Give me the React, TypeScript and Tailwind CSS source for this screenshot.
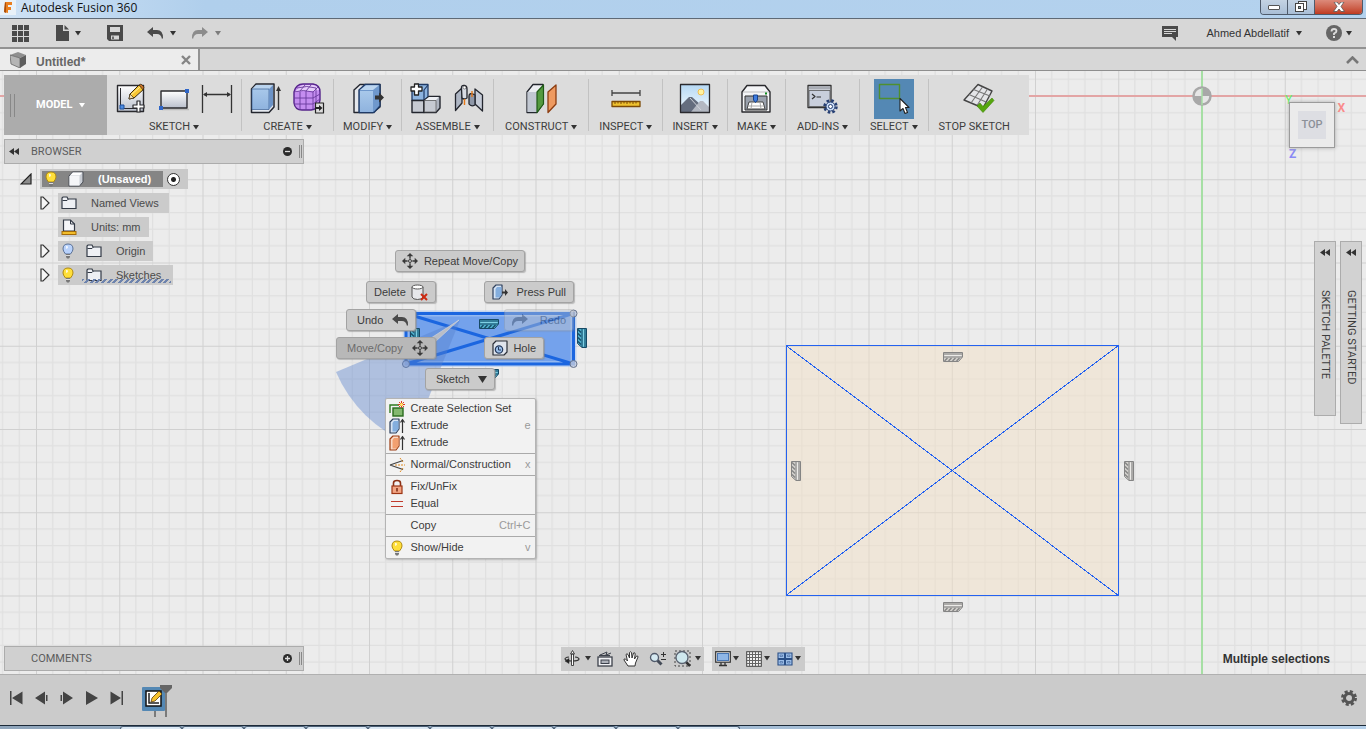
import React from "react";

const CAPS = "font-['Roboto','Liberation_Sans',sans-serif] text-[11px] leading-[14px]";

function Caret({ className = "text-[#333]" }: { className?: string }) {
    return (
        <svg width="6" height="5" viewBox="0 0 6 5" className={`shrink-0 ${className}`} aria-hidden="true">
            <path d="M0 0H6L3 4.500Z" fill="currentColor" />
        </svg>
    );
}

/* ---------- toolbar icons, all on a 32x32 grid ---------- */

function ToolSvg({ children }: { children: React.ReactNode }) {
    return (
        <svg width="32" height="32" viewBox="0 0 32 32" fill="none" strokeLinejoin="round" aria-hidden="true">
            {children}
        </svg>
    );
}

function CreateSketchIcon() {
    return (
        <ToolSvg>
            <rect x="2.500" y="2.500" width="26" height="26" fill="url(#paper)" stroke="#2a2a2e" strokeWidth="1.400" />
            <path d="M5.500 5V25.500H24" stroke="#2a2a2e" />
            <rect x="5" y="22" width="4" height="4" fill="#4b8be0" stroke="#1d4f9e" />
            <path d="M14 16L15 11L24 2L29 6L19 15Z" fill="#f7c633" stroke="#3a2a10" />
            <path d="M14 16L15 11L19 15Z" fill="#f1ddb0" stroke="#3a2a10" strokeWidth=".7" />
            <path d="M24 2L26 1L29 4L28 7Z" fill="#c7722b" stroke="#3a2a10" strokeWidth=".7" />
            <path d="M16 12L25 4" stroke="#fff0a0" />
            <path d="M22 18H25V22H29V25H25V29H22V25H18V22H22Z" fill="#fff" stroke="#2a2a2e" strokeWidth="1.200" />
        </ToolSvg>
    );
}

function RectangleIcon() {
    return (
        <ToolSvg>
            <path d="M4 26.500H31" stroke="#bbb" strokeWidth="1.500" />
            <rect x="3" y="8" width="26" height="17" fill="url(#paper)" stroke="#2a2a2e" strokeWidth="1.400" />
            <rect x="27" y="6" width="4" height="4" fill="#2f66c9" />
            <rect x="1" y="23" width="4" height="4" fill="#2f66c9" />
        </ToolSvg>
    );
}

function DimensionIcon() {
    return (
        <ToolSvg>
            <path d="M1.500 2V30M30.500 2V30M3 11.500H29" stroke="#333" strokeWidth="1.300" />
            <path d="M2 11.500L6 9V14ZM30 11.500L26 9V14Z" fill="#333" />
        </ToolSvg>
    );
}

function ExtrudeIcon() {
    return (
        <ToolSvg>
            <path d="M1.500 6L6 1H24V24L19 29.500H1.500Z" fill="#e6eaf0" stroke="#23262e" strokeWidth="1.500" />
            <path d="M2 6L6 2H23L19 6Z" fill="#b9d3ee" />
            <path d="M2 6H19V26.500H2Z" fill="url(#blue)" stroke="#3b5e92" strokeWidth=".7" />
            <path d="M19 6L23 2V22L19 26.500Z" fill="#6c93c6" />
            <path d="M28.500 27V6" stroke="#333" strokeWidth="1.400" />
            <path d="M28.500 3L31 8H26Z" fill="#333" />
        </ToolSvg>
    );
}

function FormIcon() {
    return (
        <ToolSvg>
            <path d="M1 9Q3 1 10 1H20Q27 2 27 9V17Q26 26 18 27H9Q2 27 1 20Z" fill="#c48df0" stroke="#55248a" strokeWidth="1.400" />
            <path d="M2 10Q5 3 10 2H20Q25 3 26 7L20 8H6Z" fill="#e5ccfa" />
            <path d="M7 9V27M13 8V27M1 15H20M1 21H20M1 9Q10 6 20 9V26M4 5Q14 2 23 5V24M20 15L27 11M20 21L27 16M7 8L12 2M13 8L18 2M20 9L25 4" stroke="#6a3a9c" strokeWidth=".9" />
            <rect x="22.500" y="20" width="8" height="10" fill="#ddd" stroke="#222" strokeWidth="1.200" />
            <path d="M23 25H27" stroke="#222" strokeWidth="2" />
            <path d="M26 22L29.500 25L26 28Z" fill="#222" />
        </ToolSvg>
    );
}

function PressPullIcon() {
    return (
        <ToolSvg>
            <path d="M2 7L8 1.500H28V24L21 29.500H2Z" fill="#e4e7ec" stroke="#23262e" strokeWidth="1.400" />
            <path d="M7 7L13 1.500H28V23L22 29.500H7Z" fill="#6f98cc" stroke="#1f3a66" strokeWidth="1.400" />
            <path d="M8 7L14 2.200H27L21 7Z" fill="#bcd6f0" />
            <path d="M8 8H21V29H8Z" fill="url(#blue)" />
            <path d="M23 12.500H27V9.500L32 14.500L27 19.500V16.500H23Z" fill="#333" />
        </ToolSvg>
    );
}

function ComponentIcon() {
    return (
        <ToolSvg>
            <path d="M2 7L7 1.500H18V14L14 17.500H2Z" fill="#8db4e0" stroke="#1f3a66" strokeWidth="1.300" />
            <path d="M14 17.500V7L18 2" stroke="#1f3a66" strokeWidth="1.200" />
            <path d="M2 17.500H14V29.500H2Z" fill="#c6cad2" stroke="#23262e" strokeWidth="1.400" />
            <path d="M14 17.500L19 13.500H30V25L26 29.500H14Z" fill="#aeb4c0" stroke="#23262e" strokeWidth="1.400" />
            <path d="M14.500 17.500H26V29H14.500Z" fill="#c6cad2" stroke="#555" strokeWidth=".7" />
            <path d="M15 17L19 14H29L26 17Z" fill="#eef0f4" />
            <path d="M4.500 1H8.500V4H12V8H8.500V12H4.500V8H1V4H4.500Z" fill="#fff" stroke="#222" strokeWidth="1.300" />
        </ToolSvg>
    );
}

function JointIcon() {
    return (
        <ToolSvg>
            <path d="M2.500 11L9 5V20L2.500 27.500Z" fill="#aeb6c4" stroke="#23262e" strokeWidth="1.300" />
            <path d="M8.500 6V4Q9 2 11.500 2.500Q14 3 14 6V15Q11 17 9 15Z" fill="#d9dde5" stroke="#23262e" strokeWidth="1.300" />
            <path d="M29.500 12L22 6V21L29.500 28Z" fill="#c6ccd7" stroke="#23262e" strokeWidth="1.300" />
            <path d="M22 12Q16 9 16 13V21Q18 24 22 22Z" fill="#8f98a8" stroke="#23262e" strokeWidth="1.300" />
            <path d="M11.500 16V22M19 8V14" stroke="#e67817" strokeWidth="1.400" />
            <circle cx="11.500" cy="4.500" r="1.500" fill="#fff" stroke="#444" strokeWidth=".6" />
        </ToolSvg>
    );
}

function PlaneIcon() {
    return (
        <ToolSvg>
            <path d="M2 9L8 1.500H18V21L12 29.500H2Z" fill="#eceef2" stroke="#23262e" strokeWidth="1.300" />
            <path d="M2.500 9H12V29H2.500Z" fill="#c2c8d2" />
            <path d="M12 9L18.500 2V21L12 29.500Z" fill="#549a3f" stroke="#1f5a17" strokeWidth="1.200" />
            <path d="M23 9L31 2V21L23 29.500Z" fill="#ee9a60" stroke="#8c3c10" strokeWidth="1.300" />
        </ToolSvg>
    );
}

function MeasureIcon() {
    return (
        <ToolSvg>
            <path d="M2 7V13M30 7V13M2 10H30" stroke="#444" strokeWidth="1.300" />
            <rect x="2" y="18.500" width="28" height="5" fill="#efc22f" stroke="#7c4a05" strokeWidth="1.300" />
            <path d="M5 18V21M8 18V20.500M11 18V21M14 18V20.500M17 18V21M20 18V20.500M23 18V21M26 18V20.500" stroke="#7c4a05" />
        </ToolSvg>
    );
}

function ImageIcon() {
    return (
        <ToolSvg>
            <rect x="1.500" y="1.500" width="29" height="28" fill="url(#sky)" />
            <circle cx="22" cy="9" r="3" fill="#fff3a0" stroke="#f0b23c" strokeWidth=".8" />
            <path d="M2 22L10 14H13L30 29H2Z" fill="#646d7e" />
            <path d="M12 29L21 18L24 18L30 24V29Z" fill="#b3b8c2" />
            <path d="M11 15L22 27" stroke="#cfd3da" />
            <rect x="1.500" y="1.500" width="29" height="28" stroke="#2a2a2e" strokeWidth="1.300" />
        </ToolSvg>
    );
}

function PrinterIcon() {
    return (
        <ToolSvg>
            <path d="M2 9L7 2.500H25L30 9V29H2Z" fill="#f4f5f7" stroke="#2a2a2e" strokeWidth="1.400" />
            <path d="M5 13H27V27H5Z" fill="#9aa1ad" stroke="#333" />
            <path d="M3 9H29" stroke="#bbb" />
            <path d="M9 19H23L25 26H7Z" fill="#fff" stroke="#444" />
            <path d="M8 23H24M12 19L11 26M20 19L21 26" stroke="#aaa" />
            <path d="M13.500 12H17.500V17L15.500 19.500L13.500 17Z" fill="#3c7be0" stroke="#17418a" />
            <rect x="25" y="9.500" width="2" height="2" fill="#0b8a1a" />
        </ToolSvg>
    );
}

function AddInsIcon() {
    return (
        <ToolSvg>
            <path d="M2 2.500H25V24.500H2Z" fill="#e6e8ee" stroke="#333" strokeWidth="1.300" />
            <path d="M3 7.500H24V23.500H3Z" fill="#c9cfdc" stroke="#555" strokeWidth=".8" />
            <path d="M3 3.200H24V6.500H3Z" fill="#a9adb5" />
            <path d="M6 11L9 13.500L6 16M10.500 14H15" stroke="#333" strokeWidth="1.200" />
            <circle cx="24.500" cy="23.500" r="6" stroke="#263f73" strokeWidth="2.500" strokeDasharray="2.600 2.110" />
            <circle cx="24.500" cy="23.500" r="4.500" fill="#c8dbf6" stroke="#263f73" />
            <circle cx="24.500" cy="23.500" r="2" fill="#fff" stroke="#263f73" />
        </ToolSvg>
    );
}

function SelectIcon() {
    return (
        <ToolSvg>
            <rect x="1.500" y="1.500" width="20" height="14" stroke="#4f8f2f" strokeWidth="1.400" />
            <path d="M22 15.500V28L25 25.500L27 30.500L29.500 29.500L27.500 24.500H31Z" fill="#fff" stroke="#222" strokeWidth="1.100" />
        </ToolSvg>
    );
}

function StopSketchIcon() {
    return (
        <ToolSvg>
            <path d="M15 1.500L29 8L20 25L1 17Z" fill="#e4e5e8" stroke="#444" strokeWidth="1.400" />
            <path d="M19.500 4L8 20M24.500 6L14 22.500M10.500 6.500L27 13M6 11.500L23 19" stroke="#777" strokeWidth="1.100" />
            <path d="M14 23L17 20L20 23.500L29 15L31 17.500L20 29.500Z" fill="#56a60e" stroke="#3e8506" strokeWidth=".6" />
        </ToolSvg>
    );
}

const groups = [
    { label: "SKETCH", icons: [CreateSketchIcon, RectangleIcon, DimensionIcon], pad: "px-2" },
    { label: "CREATE", icons: [ExtrudeIcon, FormIcon], pad: "px-2" },
    { label: "MODIFY", icons: [PressPullIcon], pad: "px-[9px]" },
    { label: "ASSEMBLE", icons: [ComponentIcon, JointIcon], pad: "px-2" },
    { label: "CONSTRUCT", icons: [PlaneIcon], pad: "px-[11px]" },
    { label: "INSPECT", icons: [MeasureIcon], pad: "px-[10px]" },
    { label: "INSERT", icons: [ImageIcon], pad: "px-[9px]" },
    { label: "MAKE", icons: [PrinterIcon], pad: "px-[9px]" },
    { label: "ADD-INS", icons: [AddInsIcon], pad: "px-[11px]" },
    { label: "SELECT", icons: [SelectIcon], pad: "px-[10px]", active: true },
    { label: "STOP SKETCH", icons: [StopSketchIcon], pad: "px-[10px]", noMenu: true },
];

function Toolbar() {
    return (
        <div className="flex h-[60px] w-fit bg-[#dcdcdc]">
            <button className={`${CAPS} flex w-[103px] items-center bg-[#acacac] pl-[6px] font-bold text-white`}>
                <span className="h-[23px] w-[5px] border-x border-[#888]" />
                <span className="ml-[21px]">MODEL</span>
                <Caret className="ml-[6px] text-white" />
            </button>
            {groups.map((g, i) => (
                <React.Fragment key={g.label}>
                    {i > 0 && <span className="mt-1 h-[52px] w-px bg-[#c2c2c2]" />}
                    <div className={`flex flex-col items-center gap-px pt-1 ${g.pad}`}>
                        <div className="flex h-10 items-center gap-[11px]">
                            {g.icons.map((Icon, n) => (
                                <button
                                    key={n}
                                    aria-label={g.label}
                                    className={g.active ? "flex h-10 w-10 items-center justify-center bg-[#5488b4]" : ""}
                                >
                                    <Icon />
                                </button>
                            ))}
                        </div>
                        <button className={`${CAPS} flex items-center gap-[3px] whitespace-nowrap text-[#3c3c3c]`}>
                            {g.label}
                            <Caret className={g.noMenu ? "invisible" : "text-[#333]"} />
                        </button>
                    </div>
                </React.Fragment>
            ))}
        </div>
    );
}

/* ---------- small icons ---------- */

function Bulb({ off = false }: { off?: boolean }) {
    return (
        <svg width="12" height="16" viewBox="0 0 12 16" aria-hidden="true">
            <path d="M6 1Q11 1 11 6Q11 8 8.500 11H3.500Q1 8 1 6Q1 1 6 1Z" fill={off ? "#b9d2fb" : "#ffdf3a"} stroke={off ? "#5b7297" : "#b08a12"} />
            <path d="M4 3Q6 2 6 5L4 6Z" fill="#fff" opacity=".8" />
            <path d="M4 11H8V14L7 15.500H5L4 14Z" fill="#777" />
            <path d="M4 12.500H8" stroke="#ddd" />
        </svg>
    );
}

function Folder() {
    return (
        <svg width="16" height="14" viewBox="0 0 16 14" aria-hidden="true">
            <path d="M1 12.500V2L2 1H6L7 3H15V12.500Z" fill="#eef0f4" stroke="#333a46" strokeWidth="1.200" />
            <path d="M1.500 4.500H6L7.500 3" fill="none" stroke="#333a46" />
        </svg>
    );
}

function UnitsIcon() {
    return (
        <svg width="16" height="16" viewBox="0 0 16 16" aria-hidden="true">
            <path d="M2.500 12V1H9.500L13.500 5V12Z" fill="#f4f5f8" stroke="#333a46" strokeWidth="1.200" />
            <path d="M9.500 1V5H13.500" fill="none" stroke="#333a46" />
            <rect x="1" y="12.500" width="14" height="3" fill="#f2bd2b" stroke="#a36a08" />
        </svg>
    );
}

function BoxIcon() {
    return (
        <svg width="16" height="16" viewBox="0 0 16 16" strokeLinejoin="round" aria-hidden="true">
            <path d="M1 5L4.500 1H15V11L11.500 15H1Z" fill="#c9cdd4" stroke="#4a4e56" />
            <path d="M1.500 5H11.500V14.500H1.500Z" fill="#f5f6f8" />
            <path d="M2 4.500L5 1.500H14.500L11.500 4.500Z" fill="#fff" />
        </svg>
    );
}

function Expander() {
    return (
        <svg width="10" height="14" viewBox="0 0 10 14" aria-hidden="true">
            <path d="M1 1H3L9 7L3 13H1Z" fill="#f6f6f6" stroke="#333" strokeWidth="1.200" />
        </svg>
    );
}

function MoveIcon() {
    return (
        <svg width="16" height="16" viewBox="0 0 17 17" fill="#3a3a3a" aria-hidden="true">
            <path d="M8.500 0L12 3.500H5ZM8.500 17L12 13.500H5ZM0 8.500L3.500 5V12ZM17 8.500L13.500 5V12Z" />
            <path d="M8.500 3V6M8.500 11V14M3 8.500H6M11 8.500H14" stroke="#3a3a3a" strokeWidth="1.500" />
            <circle cx="8.500" cy="8.500" r="1.600" fill="none" stroke="#3a3a3a" />
        </svg>
    );
}

function UndoArrow({ flip = false, className = "text-[#4a4a4a]" }: { flip?: boolean; className?: string }) {
    return (
        <svg width="16" height="12" viewBox="0 0 16 12" className={`${flip ? "-scale-x-100" : ""} ${className}`} aria-hidden="true">
            <path d="M0 5L6 0V3H10Q16 3 16 11L15 12Q14 7 10 7H6V10Z" fill="currentColor" />
        </svg>
    );
}

function MiniExtrude({ orange = false, pull = false }: { orange?: boolean; pull?: boolean }) {
    return (
        <svg width="16" height="16" viewBox="0 0 16 16" strokeLinejoin="round" aria-hidden="true">
            <path d="M1 4L4 1H10V11L7 15H1Z" fill={orange ? "#f9d9c6" : "#d7e4f4"} stroke={orange ? "#9c3b10" : "#2d3f5c"} strokeWidth="1.200" />
            <path d="M3.500 5L5 3H9.500V11L7.500 13.500H3.500Z" fill={orange ? "#f2a070" : "#84aede"} />
            {pull ? (
                <path d="M10 7.500H13V5L16 8.500L13 12V9.500H10Z" fill="#333" />
            ) : (
                <path d="M13.500 15V2M11.500 4.500L13.500 1.500L15.500 4.500" fill="none" stroke="#333" strokeWidth="1.200" />
            )}
        </svg>
    );
}

function DeleteIcon() {
    return (
        <svg width="17" height="17" viewBox="0 0 17 17" aria-hidden="true">
            <path d="M1 3V13Q2 15.500 6.500 15.500Q11 15.500 12 13V3Z" fill="#e6e7ea" stroke="#555" />
            <ellipse cx="6.500" cy="3" rx="5.500" ry="2" fill="#fff" stroke="#555" />
            <path d="M10 10L16 16M16 10L10 16" stroke="#cc2a12" strokeWidth="2" />
        </svg>
    );
}

function HoleIcon() {
    return (
        <svg width="16" height="16" viewBox="0 0 16 16" strokeLinejoin="round" aria-hidden="true">
            <path d="M1 4L4 1H15V12L12 15H1Z" fill="#dfe4ec" stroke="#2b2f38" strokeWidth="1.200" />
            <circle cx="7" cy="9.500" r="3.700" fill="#9cc0ea" stroke="#23375a" strokeWidth="1.200" />
            <path d="M6.500 7V10H9" fill="none" stroke="#23375a" />
        </svg>
    );
}

/* ---------- canvas drawing ---------- */

function Hatch({ x, y, vertical = false, teal = false }: { x: number; y: number; vertical?: boolean; teal?: boolean }) {
    const ink = teal ? "#164a66" : "#848484";
    return (
        <g transform={`translate(${x} ${y}) ${vertical ? "rotate(90)" : ""}`} strokeLinejoin="round">
            <path d="M-9.500 -4.500H9.500V0L5.500 4.500H-9.500Z" fill={teal ? "#4fb0cc" : "#d2d0cc"} stroke={ink} />
            <path d="M-8.500 -1.500H8.500" stroke={teal ? "#7fd0e4" : "#ecebe8"} strokeWidth="1.200" />
            <path d="M-9 0H9M-9 -3H9" stroke={ink} />
            <path d="M-8.500 4L-5.500 1M-4.500 4L-1.500 1M-.5 4L2.500 1M3.500 4L6.500 1" stroke={ink} strokeWidth="1.300" />
        </g>
    );
}

function CanvasDrawing() {
    return (
        <svg className="absolute inset-0 h-full w-full" aria-hidden="true">
            <defs>
                <linearGradient id="paper" x1="0" y1="0" x2="0" y2="1">
                    <stop offset="0" stopColor="#fff" />
                    <stop offset="1" stopColor="#b9bfcc" />
                </linearGradient>
                <linearGradient id="blue" x1="0" y1="0" x2="0" y2="1">
                    <stop offset="0" stopColor="#a8c8ea" />
                    <stop offset="1" stopColor="#8fb3de" />
                </linearGradient>
                <linearGradient id="sky" x1="0" y1="0" x2="0" y2="1">
                    <stop offset="0" stopColor="#b5d8f4" />
                    <stop offset="1" stopColor="#f4fbff" />
                </linearGradient>
                <pattern id="grid" x="36" y="25" width="83.250" height="83.250" patternUnits="userSpaceOnUse">
                    <path
                        d="M16.650 0V84M33.300 0V84M49.950 0V84M66.600 0V84M0 16.650H84M0 33.300H84M0 49.950H84M0 66.600H84"
                        stroke="#e0e0e0"
                        strokeWidth="1.300"
                    />
                    <path d="M.5 0V84M0 .5H84" stroke="#d0d0d0" strokeWidth="1" />
                </pattern>
            </defs>
            <rect width="100%" height="100%" fill="#ececec" />
            <rect width="100%" height="100%" fill="url(#grid)" />
            <g transform="translate(0 -71)">
                <path d="M0 96H3000" stroke="#e3a5a5" strokeWidth="2" />
                <path d="M1202 71V3000" stroke="#a6dfa4" strokeWidth="2" />
                <circle cx="1202" cy="96" r="8.500" fill="#e6e6e6" stroke="#a8a8a8" strokeWidth="2.500" />
                <path d="M1202 96V104.500A8.500 8.500 0 0 0 1210.500 96ZM1202 96V87.500A8.500 8.500 0 0 0 1193.500 96Z" fill="#a8a8a8" transform="rotate(90 1202 96)" />
                <path d="M1202 88V105" stroke="#a6dfa4" strokeWidth="1.500" />

                <rect x="786" y="345.500" width="333" height="250" fill="#f3dfc4" fillOpacity=".45" />
                <path d="M786 345.500H1118.500V595.500H786ZM786 345.500L1118.500 595.500M1118.500 345.500L786 595.500" fill="none" stroke="#2462f0" strokeWidth="1" shapeRendering="crispEdges" />
                <Hatch x={953} y={357} />
                <Hatch x={953} y={607} />
                <Hatch x={796} y={471} vertical />
                <Hatch x={1129} y={471} vertical />

                <path d="M406 313.500H573.500V364H406Z" fill="#74a2ec" stroke="#a9c6f4" strokeWidth="6" strokeOpacity=".6" />
                <path d="M406 313.500H573.500V364H406ZM406 313.500L573.500 364M573.500 313.500L406 364" fill="none" stroke="#1b66e0" strokeWidth="3" />
                <g fill="#c5cddd" fillOpacity=".8" stroke="#68748c">
                    <circle cx="573.500" cy="313.500" r="3.500" />
                    <circle cx="573.500" cy="364" r="3.500" />
                    <circle cx="406" cy="364" r="3.500" />
                </g>
                <Hatch x={489} y={324} teal />
                <Hatch x={415} y={338} teal vertical />
                <Hatch x={582} y={338} teal vertical />
                <Hatch x={489} y={374} teal />

                <path d="M460 320L336 372A134 134 0 0 0 410 444Z" fill="#5580cc" fillOpacity=".4" />
                <path d="M459 320L431 338L435 342Z" fill="#b9bdc6" stroke="#d5d8de" strokeWidth=".6" />
            </g>
        </svg>
    );
}

function ViewCube() {
    return (
        <div className="absolute top-[31px] right-[31px] h-[46px] w-[46px] font-['Roboto','Liberation_Sans',sans-serif] text-[12px] leading-[12px]">
            <span className="absolute -top-2 -left-1 text-[#63f063]">Y</span>
            <span className="absolute top-0 -right-[10px] font-bold text-[#f98b8b]">X</span>
            <span className="absolute top-[46px] left-0 font-bold text-[#8a8af5]">Z</span>
            <button className="relative flex h-full w-full items-center justify-center border border-[#9b9b9b] bg-[#ebebeb] shadow-[0_0_4px_#aaa]">
                <span className="flex h-7 w-7 items-center justify-center bg-[#dddee3] text-[11px] font-medium text-[#8c9098]">TOP</span>
            </button>
        </div>
    );
}

/* ---------- panels ---------- */

function PanelHeader({ title, plus = false }: { title: string; plus?: boolean }) {
    return (
        <div className={`${CAPS} flex h-[25px] w-[300px] items-center border border-[#acacac] bg-[#d0d0d0] text-[#5c5c5c]`}>
            <span className="flex w-[26px] pl-1">
                {!plus && (
                    <svg width="10" height="7" viewBox="0 0 10 7" aria-hidden="true">
                        <path d="M5 0V7L0 3.500ZM10 0V7L5 3.500Z" fill="#333" />
                    </svg>
                )}
            </span>
            <span className="grow">{title}</span>
            <button aria-label={title} className="mr-[7px]">
                <svg width="9" height="9" viewBox="0 0 9 9" aria-hidden="true">
                    <circle cx="4.500" cy="4.500" r="4.500" fill="#2b2b2b" />
                    <path d={plus ? "M2 4.500H7M4.500 2V7" : "M2 4.500H7"} stroke="#ddd" strokeWidth="1.300" />
                </svg>
            </button>
            <span className="mr-px h-[13px] w-[3px] border-x border-[#888]" />
        </div>
    );
}

function Browser() {
    return (
        <div className="font-['Liberation_Sans',sans-serif] text-[11px] text-[#4a4a4a]">
            <PanelHeader title="BROWSER" />
            <ul className="mt-[5px] flex flex-col gap-1">
                <li className="flex h-5 items-center">
                    <svg width="12" height="12" viewBox="0 0 12 12" className="mr-2 ml-4" aria-hidden="true">
                        <path d="M11 1V11H1Z" fill="#8d8d8d" stroke="#222" strokeWidth="1.200" />
                    </svg>
                    <div className="flex h-5 items-center bg-[#c9c9c9] px-[2px]">
                        <div className="flex h-4 items-center bg-[#858585] pr-3 pl-[3px] font-bold text-white">
                            <Bulb />
                            <span className="mr-[14px] ml-[11px]"><BoxIcon /></span>
                            (Unsaved)
                        </div>
                        <input
                            type="radio"
                            aria-label="Activate component"
                            defaultChecked
                            className="mr-[6px] ml-1 h-[13px] w-[13px] appearance-none rounded-full border border-[#333] bg-[radial-gradient(circle,#222_2px,#fff_3px)]"
                        />
                    </div>
                </li>
                <li className="flex h-5 items-center pl-9">
                    <Expander />
                    <div className="ml-2 flex h-5 items-center bg-[#cbcbcb] pr-[10px] pl-[3px]">
                        <Folder />
                        <span className="ml-[14px]">Named Views</span>
                    </div>
                </li>
                <li className="flex h-5 items-center pl-[54px]">
                    <div className="flex h-5 items-center bg-[#cbcbcb] pr-2 pl-[3px]">
                        <UnitsIcon />
                        <span className="ml-[14px]">Units: mm</span>
                    </div>
                </li>
                <li className="flex h-5 items-center pl-9">
                    <Expander />
                    <div className="ml-2 flex h-5 items-center bg-[#cbcbcb] pr-2 pl-1">
                        <Bulb off />
                        <span className="mr-[14px] ml-3"><Folder /></span>
                        Origin
                    </div>
                </li>
                <li className="flex h-5 items-center pl-9">
                    <Expander />
                    <div className="relative ml-2 flex h-5 items-center bg-[#cbcbcb] pr-3 pl-1">
                        <Bulb />
                        <span className="mr-[14px] ml-3"><Folder /></span>
                        Sketches
                        <span className="absolute right-[2px] bottom-[2px] left-6 h-1 bg-[repeating-linear-gradient(135deg,#6d83ad_0_2px,transparent_2px_4px)]" />
                    </div>
                </li>
            </ul>
        </div>
    );
}

function SidePalette({ title, height }: { title: string; height: string }) {
    return (
        <button className={`${CAPS} ${height} flex w-[22px] flex-col items-center border border-[#acacac] bg-[#d2d2d2] pt-[7px] text-[#3c3c3c]`}>
            <svg width="10" height="7" viewBox="0 0 10 7" aria-hidden="true">
                <path d="M5 0V7L0 3.500ZM10 0V7L5 3.500Z" fill="#333" />
            </svg>
            <span className="mt-[34px] [writing-mode:vertical-rl]">{title}</span>
        </button>
    );
}

const PILL = "flex h-[22px] items-center rounded-[3px] border border-[#a3a3a3] shadow-[1px_1px_1px_#8888]";

const menuSections = [
    [
        { label: "Create Selection Set", key: "", icon: "set" },
        { label: "Extrude", key: "e", icon: "extrude" },
        { label: "Extrude", key: "", icon: "extrudeOrange" },
    ],
    [{ label: "Normal/Construction", key: "x", icon: "normal" }],
    [
        { label: "Fix/UnFix", key: "", icon: "lock" },
        { label: "Equal", key: "", icon: "equal" },
    ],
    [{ label: "Copy", key: "Ctrl+C", icon: "" }],
    [{ label: "Show/Hide", key: "v", icon: "bulb" }],
];

function MenuIcon({ icon }: { icon: string }) {
    if (icon === "extrude") return <MiniExtrude />;
    if (icon === "extrudeOrange") return <MiniExtrude orange />;
    if (icon === "bulb") return <Bulb />;
    return (
        <svg width="16" height="16" viewBox="0 0 16 16" fill="none" aria-hidden="true">
            {icon === "set" && (
                <>
                    <path d="M1 12V4H10" stroke="#2f7a1f" strokeWidth="1.400" />
                    <rect x="4" y="7" width="10" height="8" fill="#84b870" stroke="#2a6b1d" strokeWidth="1.400" />
                    <path d="M12.500 0V7M9 3.500H16M10 1L15 6M15 1L10 6" stroke="#e03a1a" />
                    <circle cx="12.500" cy="3.500" r="1.500" fill="#fff36b" />
                </>
            )}
            {icon === "normal" && (
                <>
                    <path d="M1 8L14 3.500M1 8L14 12.500" stroke="#444" strokeWidth="1.300" />
                    <path d="M6 8H16M11 1L14 5M11 15L14 11" stroke="#e08a1f" strokeDasharray="2 1" />
                </>
            )}
            {icon === "lock" && (
                <>
                    <path d="M4.500 7V4Q4.500 1.500 8 1.500Q11.500 1.500 11.500 4V7" stroke="#8c3216" strokeWidth="1.600" />
                    <rect x="3" y="7" width="10" height="7.500" fill="#f2a584" stroke="#9c3514" strokeWidth="1.200" />
                    <path d="M8 9V12.500" stroke="#702008" strokeWidth="1.400" />
                </>
            )}
            {icon === "equal" && <path d="M2 5.500H14M2 10.500H14" stroke="#c0392b" strokeWidth="1.200" />}
        </svg>
    );
}

function MarkingMenu() {
    return (
        <div className="absolute top-[179px] left-[336px] w-[248px] font-['Liberation_Sans',sans-serif] text-[11px] leading-[17px] text-[#3c3c3c]">
            <div className="flex justify-center">
                <button className={`${PILL} gap-[6px] bg-[#cbcbcb] px-[6px]`}><MoveIcon />Repeat Move/Copy</button>
            </div>
            <div className="mt-[9px] grid grid-cols-2 gap-12">
                <button className={`${PILL} w-[70px] justify-between justify-self-end bg-[#cbcbcb] px-[7px]`}>Delete<DeleteIcon /></button>
                <button className={`${PILL} w-[90px] justify-between justify-self-start bg-[#cbcbcb] px-[7px]`}><MiniExtrude pull />Press Pull</button>
            </div>
            <div className="mt-[6px] grid grid-cols-2 gap-[88px]">
                <button className={`${PILL} w-[70px] justify-between justify-self-end bg-[#cbcbcb] pr-[7px] pl-[10px]`}>Undo<UndoArrow /></button>
                <button className={`${PILL} w-[70px] justify-between justify-self-start bg-[#cbcbcb] px-[7px] opacity-40`}><UndoArrow flip />Redo</button>
            </div>
            <div className="mt-[6px] grid grid-cols-2 gap-12">
                <button className={`${PILL} w-[100px] justify-between justify-self-end bg-[#b8b8b8] pr-[7px] pl-[10px] text-[#6c6c6c]`}>Move/Copy<MoveIcon /></button>
                <button className={`${PILL} w-[60px] justify-between justify-self-start bg-[#cbcbcb] px-[7px]`}><HoleIcon />Hole</button>
            </div>
            <div className="mt-[9px] flex justify-center">
                <button className={`${PILL} w-[70px] justify-between bg-[#cbcbcb] pr-[7px] pl-[10px]`}>
                    Sketch
                    <svg width="9" height="7" viewBox="0 0 9 7" aria-hidden="true"><path d="M0 0H9L4.500 7Z" fill="#333" /></svg>
                </button>
            </div>
            <div role="menu" className="mx-auto mt-2 w-[151px] rounded-[2px] border border-[#b4b4b4] bg-[#f2f2f2] pt-px pb-[2px] shadow-[1px_1px_2px_#8888]">
                {menuSections.map((section, i) => (
                    <div key={i} className={i > 0 ? "mt-[2px] border-t border-[#aaa] pt-[2px]" : ""}>
                        {section.map((item, n) => (
                            <button key={n} role="menuitem" className="flex h-[17px] w-full items-center pr-1 pl-[3px] whitespace-nowrap">
                                <span className="flex w-4 justify-center">
                                    {item.icon && <MenuIcon icon={item.icon} />}
                                </span>
                                <span className="ml-[6px] grow text-left">{item.label}</span>
                                <span className="text-[#9a9a9a]">{item.key}</span>
                            </button>
                        ))}
                    </div>
                ))}
            </div>
        </div>
    );
}

function NavBar() {
    return (
        <div className="flex gap-2">
            <div className="flex h-6 items-center bg-[#cbcbcb] px-[3px]">
                <button aria-label="Orbit" className="flex items-center gap-1">
                    <svg width="17" height="17" viewBox="0 0 17 17" fill="none" stroke="#333" aria-hidden="true">
                        <path d="M5 7Q1 7.500 1 9Q2 11 8 11Q15 11 15 9Q15 7.500 11 7" strokeWidth="1.200" />
                        <path d="M1 11L5 8.500V13.500Z" fill="#222" strokeWidth=".5" />
                        <path d="M7.500 15.500V4H9.500V15.500ZM8.500 .5L6.500 4H10.500Z" fill="#fff" strokeWidth=".9" />
                    </svg>
                    <Caret />
                </button>
                <button aria-label="Look at" className="ml-[6px]">
                    <svg width="16" height="16" viewBox="0 0 16 16" fill="none" stroke="#3c414b" aria-hidden="true">
                        <path d="M3 4L10 1L9 4M9 4L14 2" />
                        <rect x="1" y="6" width="14" height="9" fill="#f0f1f4" strokeWidth="1.300" />
                        <rect x="4" y="9" width="8" height="3.500" fill="#aeb2ba" />
                        <path d="M2 4.500H13" strokeWidth="1.200" />
                    </svg>
                </button>
                <button aria-label="Pan" className="ml-[10px]">
                    <svg width="16" height="16" viewBox="0 0 16 16" fill="#fff" stroke="#333" strokeLinejoin="round" aria-hidden="true">
                        <path d="M5 15L1 9Q0.500 7.500 2.500 8L4.500 10L3 3.500Q4 2 5 3.500L6.500 7L6.500 1.500Q7.500 0 8.500 1.500L9 7L10.500 2Q12 1 12.200 3L11.500 8L13.500 5Q15 4.500 15 6L12.500 12L12 15Z" />
                    </svg>
                </button>
                <button aria-label="Zoom" className="ml-[10px]">
                    <svg width="17" height="16" viewBox="0 0 17 16" fill="none" aria-hidden="true">
                        <path d="M8 9L12.500 13.500" stroke="#444b58" strokeWidth="3" />
                        <circle cx="5.500" cy="6.500" r="4" fill="#d6eaf2" stroke="#50596a" strokeWidth="1.300" />
                        <path d="M12 3.500H17M14.500 1V6M12 8.500H17" stroke="#333" />
                    </svg>
                </button>
                <button aria-label="Fit" className="ml-2 flex items-center gap-[3px]">
                    <svg width="18" height="17" viewBox="0 0 18 17" fill="none" aria-hidden="true">
                        <rect x="1" y="1" width="15" height="15" stroke="#444" strokeDasharray="2 2" />
                        <path d="M11 11L16 16" stroke="#333" strokeWidth="2.500" />
                        <circle cx="8" cy="7.500" r="6" fill="#cfe8ee" stroke="#5a6270" strokeWidth="1.300" />
                    </svg>
                    <Caret />
                </button>
            </div>
            <div className="flex h-6 items-center gap-[7px] bg-[#cbcbcb] pr-1 pl-[3px]">
                <button aria-label="Display settings" className="flex items-center gap-[2px]">
                    <svg width="16" height="17" viewBox="0 0 16 17" fill="none" stroke="#333" aria-hidden="true">
                        <rect x=".7" y="1.700" width="14.600" height="10.500" fill="#eee" strokeWidth="1.200" />
                        <rect x="2.500" y="3.500" width="11" height="7" fill="#8fb6e6" stroke="#4775b3" />
                        <path d="M6 12.500V15M10 12.500V15M4 15.500H12" strokeWidth="1.300" />
                    </svg>
                    <Caret />
                </button>
                <button aria-label="Grid settings" className="flex items-center gap-[2px]">
                    <svg width="16" height="16" viewBox="0 0 16 16" fill="none" stroke="#666" aria-hidden="true">
                        <rect x=".7" y=".7" width="14.600" height="14.600" fill="#f4f4f4" stroke="#444" />
                        <path d="M3.500 1V15M6.500 1V15M9.500 1V15M12.500 1V15M1 3.500H15M1 6.500H15M1 9.500H15M1 12.500H15" />
                    </svg>
                    <Caret />
                </button>
                <button aria-label="Viewports" className="flex items-center gap-[2px]">
                    <svg width="16" height="14" viewBox="0 0 16 14" fill="#9dbfe9" stroke="#2a4f86" aria-hidden="true">
                        <path d="M1 1H7.500V6.500H1ZM8.500 1H15V6.500H8.500ZM1 7.500H7.500V13H1ZM8.500 7.500H15V13H8.500Z" strokeWidth="1.100" />
                        <path d="M3 3H5.500V4.500H3ZM10.500 3H13V4.500H10.500ZM3 9.500H5.500V11H3ZM10.500 9.500H13V11H10.500Z" strokeWidth=".5" />
                    </svg>
                    <Caret />
                </button>
            </div>
        </div>
    );
}

/* ---------- window bars ---------- */

function TitleBar() {
    return (
        <header className="flex h-[19px] shrink-0 items-start justify-between border-b border-[#5f6a76] bg-linear-to-r from-[#cfe2f5] via-[#b0cfec] via-15% to-[#b4d2ee]">
            <div className="flex h-4 items-center gap-[5px]">
                <svg width="16" height="16" viewBox="0 0 16 16" aria-hidden="true">
                    <rect width="16" height="15" fill="#e9f1f8" />
                    <path d="M5 2H12V5H8V7H11V10H8V13L4 12Z" fill="#ea7f1e" />
                    <path d="M5 2L4 12L6 13V3Z" fill="#a94f0d" />
                </svg>
                <h1 className="font-['Open_Sans','Noto_Sans',sans-serif] text-[12px] leading-4 text-[#111]">Autodesk Fusion 360</h1>
            </div>
            <div className="mr-[3px] flex h-[15px] overflow-hidden rounded-b-[4px] border border-t-0 border-[#4e5b6c]">
                <button aria-label="Minimize" className="flex w-[27px] items-center justify-center border-r border-[#4e5b6c] bg-linear-to-b from-[#c4d3e3] to-[#a9bed6]">
                    <span className="mt-px h-[5px] w-3 rounded-[1px] border border-[#555] bg-white" />
                </button>
                <button aria-label="Restore" className="flex w-[27px] items-center justify-center border-r border-[#4e5b6c] bg-linear-to-b from-[#c4d3e3] to-[#a9bed6]">
                    <svg width="12" height="12" viewBox="0 0 12 12" fill="#fff" stroke="#444" aria-hidden="true">
                        <rect x="3.500" y=".5" width="8" height="8" />
                        <rect x=".5" y="2.500" width="8" height="8" />
                        <rect x="3.500" y="5.500" width="2" height="2" fill="#8aa" />
                    </svg>
                </button>
                <button aria-label="Close" className="flex w-[47px] items-center justify-center bg-linear-to-b from-[#dc8a7a] to-[#bf3a20]">
                    <svg width="12" height="10" viewBox="0 0 12 10" aria-hidden="true">
                        <path d="M1 0H4L6 2.500L8 0H11L8 4.500L11.500 9.500H8L6 7L4 9.500H.5L4 4.500Z" fill="#fff" stroke="#555" strokeWidth=".8" />
                    </svg>
                </button>
            </div>
        </header>
    );
}

function AppBar() {
    return (
        <div className="flex h-[30px] shrink-0 items-center border-b-2 border-[#929292] bg-[#d7d7d7] pr-[14px] pl-3 text-[#4a4a4a]">
            <button aria-label="Data panel">
                <svg width="17" height="17" viewBox="0 0 17 17" fill="currentColor" aria-hidden="true">
                    <path d="M0 0H5V5H0ZM6 0H11V5H6ZM12 0H17V5H12ZM0 6H5V11H0ZM6 6H11V11H6ZM12 6H17V11H12ZM0 12H5V17H0ZM6 12H11V17H6ZM12 12H17V17H12Z" />
                </svg>
            </button>
            <button aria-label="File" className="ml-[27px] flex items-center gap-[6px]">
                <svg width="13" height="16" viewBox="0 0 13 16" fill="currentColor" aria-hidden="true">
                    <path d="M0 0H7V6H13V16H0Z" />
                    <path d="M8.500 0L13 4.500H8.500Z" />
                </svg>
                <Caret />
            </button>
            <button aria-label="Save" className="ml-[26px]">
                <svg width="16" height="16" viewBox="0 0 16 16" aria-hidden="true">
                    <path d="M0 0H16V16H2L0 14Z" fill="currentColor" />
                    <path d="M3 2H13V7H3ZM4 10.500H12V14.500H4Z" fill="#d7d7d7" />
                    <path d="M6 11.500V14" stroke="currentColor" strokeWidth="1.500" />
                </svg>
            </button>
            <button aria-label="Undo" className="ml-6 flex items-center gap-[7px]"><UndoArrow /><Caret /></button>
            <button aria-label="Redo" className="ml-4 flex items-center gap-[7px]">
                <UndoArrow flip className="text-[#8c8c8c]" />
                <Caret className="text-[#7c7c7c]" />
            </button>
            <button aria-label="Comments" className="ml-auto">
                <svg width="16" height="15" viewBox="0 0 16 15" aria-hidden="true">
                    <path d="M0 0H16V11H14V15L10 11H0Z" fill="currentColor" />
                    <path d="M2 3.500H14M2 5.500H14M2 7.500H10" stroke="#d7d7d7" />
                </svg>
            </button>
            <button className="ml-7 flex items-center gap-[7px] font-['Liberation_Sans',sans-serif] text-[11px] text-[#333]">
                Ahmed Abdellatif
                <Caret />
            </button>
            <button aria-label="Help" className="ml-6 flex items-center gap-1">
                <svg width="16" height="16" viewBox="0 0 16 16" fill="none" aria-hidden="true">
                    <circle cx="8" cy="8" r="8" fill="#666" />
                    <path d="M5.500 6.500Q5.500 4 8 4Q10.500 4 10.500 6Q10.500 7.500 8 8.500V10" stroke="#ddd" strokeWidth="1.800" />
                    <path d="M7 11H9V13H7Z" fill="#ddd" />
                </svg>
                <Caret />
            </button>
        </div>
    );
}

function DocumentTabs() {
    return (
        <div className="flex h-[22px] shrink-0 items-center justify-between border-b border-[#8e8e8e] bg-[#d7d7d7]">
            <div className="flex h-full w-[200px] items-center border-r-2 border-[#929292] bg-[#ececec] pr-[7px] pl-[10px]">
                <svg width="16" height="16" viewBox="0 0 16 16" aria-hidden="true">
                    <path d="M0 3L8 0L16 3L10 6Z" fill="#8f8f8f" />
                    <path d="M0 3L10 6V16L1 12Z" fill="#b5b5b5" stroke="#666" strokeWidth=".8" />
                    <path d="M10 6L16 3V12L10 16Z" fill="#5e5e5e" />
                </svg>
                <span className="ml-[10px] grow pt-1 font-['Liberation_Sans',sans-serif] text-[12px] leading-4 font-bold text-[#666]">Untitled*</span>
                <button aria-label="Close tab">
                    <svg width="10" height="10" viewBox="0 0 10 10" aria-hidden="true">
                        <path d="M1 1L9 9M9 1L1 9" stroke="#858585" strokeWidth="2.400" />
                    </svg>
                </button>
            </div>
            <button aria-label="Collapse" className="mr-[7px]">
                <svg width="13" height="8" viewBox="0 0 13 8" fill="none" aria-hidden="true">
                    <path d="M1 7L6.500 1.500L12 7" stroke="#777" strokeWidth="2.600" />
                </svg>
            </button>
        </div>
    );
}

const playback = [
    { label: "Start", d: "M0 0H1.500V14H0ZM12.500 .5V13.500L2 7Z" },
    { label: "Step back", d: "M10 .5V13.500L0 7ZM11 4H12.500V10H11Z" },
    { label: "Step forward", d: "M3 .5V13.500L13 7ZM.5 4H2V10H.5Z" },
    { label: "Play", d: "M1 0V14L13 7Z" },
    { label: "End", d: "M11.500 0H13V14H11.500ZM.5 .5V13.500L11 7Z" },
];

function Timeline() {
    return (
        <div className="flex h-[51px] shrink-0 border-t border-[#b0b0b0] bg-[#cbcbcb] px-[10px]">
            <div className="flex h-[46px] items-center gap-3">
                {playback.map((p) => (
                    <button key={p.label} aria-label={p.label}>
                        <svg width="13" height="14" viewBox="0 0 13 14" aria-hidden="true">
                            <path d={p.d} fill="#444" />
                        </svg>
                    </button>
                ))}
            </div>
            <button aria-label="Sketch feature" className="mt-[9px] ml-[18px] self-start">
                <svg width="32" height="34" viewBox="0 0 32 34" aria-hidden="true">
                    <rect x="1" y="3" width="23" height="24" rx="1" fill="#5488b4" />
                    <rect x="5" y="7" width="15" height="15" fill="#fff" stroke="#111" strokeWidth="1.500" />
                    <path d="M8 9V19H18" fill="none" stroke="#222" strokeWidth="1.500" />
                    <path d="M10 18L11 14L18 7L21 10L14 17Z" fill="#f6c22e" stroke="#5a3b0a" strokeWidth=".8" />
                    <path d="M19 1H31V4L26 9H24L19 4Z" fill="#666" />
                    <path d="M25 8V33M14 27V33" stroke="#666" strokeWidth="1.600" />
                </svg>
            </button>
            <button aria-label="Settings" className="-mr-[2px] ml-auto h-[46px]">
                <svg width="18" height="18" viewBox="0 0 18 18" fill="none" stroke="#555" aria-hidden="true">
                    <circle cx="9" cy="9" r="6.500" strokeWidth="3" strokeDasharray="3 2.105" />
                    <circle cx="9" cy="9" r="4.500" strokeWidth="3" />
                </svg>
            </button>
        </div>
    );
}

export default function App() {
    return (
        <div className="flex h-screen flex-col overflow-hidden">
            <TitleBar />
            <AppBar />
            <DocumentTabs />
            <main className="relative flex min-h-0 grow flex-col px-1 pt-1 pb-[3px]">
                <CanvasDrawing />
                <ViewCube />
                <div className="relative"><Toolbar /></div>
                <div className="relative mt-1 flex grow items-start justify-between">
                    <Browser />
                    <div className="mt-[102px] flex items-start gap-1">
                        <SidePalette title="SKETCH PALETTE" height="h-[175px]" />
                        <SidePalette title="GETTING STARTED" height="h-[183px]" />
                    </div>
                </div>
                <div className="relative grid grid-cols-[1fr_auto_1fr] items-center">
                    <PanelHeader title="COMMENTS" plus />
                    <NavBar />
                    <p className="pr-8 text-right font-['Liberation_Sans',sans-serif] text-[12px] leading-4 font-bold text-[#333]">Multiple selections</p>
                </div>
                <MarkingMenu />
            </main>
            <Timeline />
            <footer className="flex h-1 shrink-0 border-t border-[#1c2a38] bg-linear-to-r from-[#8fa5bb] to-[#b5d0ea] pl-[120px]">
                {Array.from({ length: 10 }, (_, i) => (
                    <span key={i} className="w-[62px] rounded-t-[3px] border border-b-0 border-[#4b5f75] bg-[#dce9f5]" />
                ))}
            </footer>
        </div>
    );
}
